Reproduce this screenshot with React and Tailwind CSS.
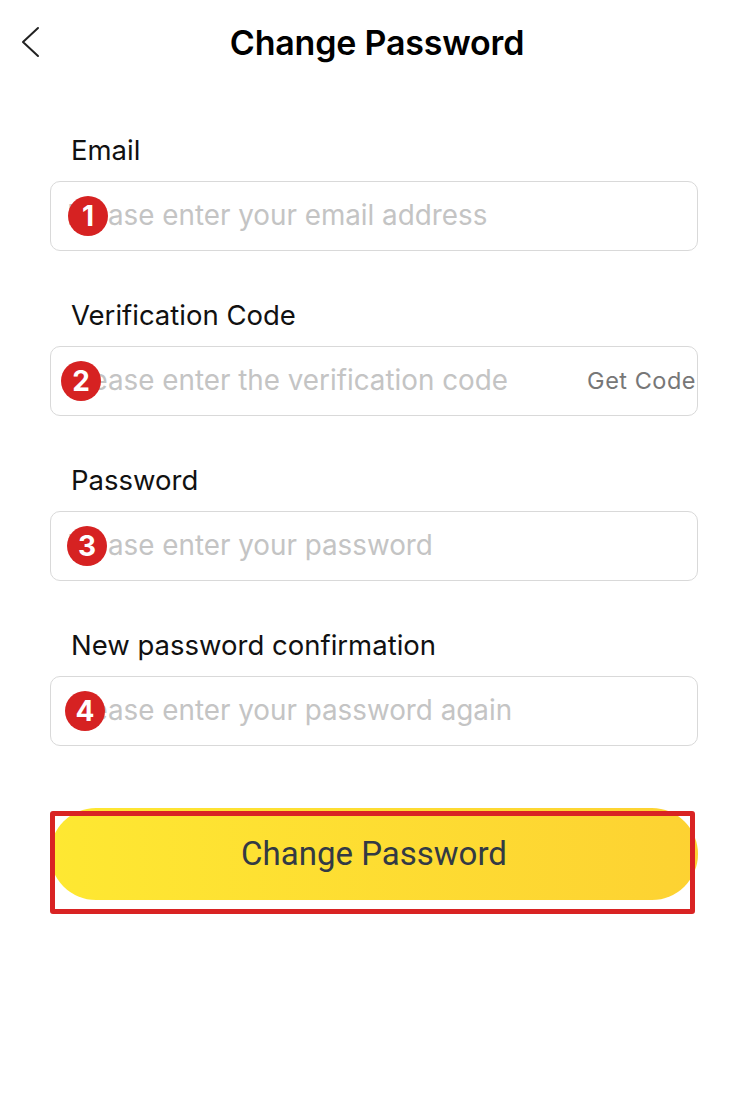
import { useState } from "react";

function Badge({ n, left }) {
    return (
        <span
            className="absolute top-1/2 -translate-y-1/2 w-[40px] h-[40px] rounded-full bg-[#d62222] text-white flex items-center justify-center text-[28px] font-bold leading-none"
            style={{ left }}
        >
            {n}
        </span>
    );
}

function Field({ label, placeholder, badge, badgeLeft, extra }) {
    return (
        <div className="flex flex-col">
            <label className="pl-[21px] text-[27.5px] leading-[32px] text-[#111] mb-[15px]">{label}</label>
            <div className="relative h-[70px] border border-[#d9d9d9] rounded-[10px] flex items-center pl-[16px] pr-[1px]">
                <input
                    className="flex-1 min-w-0 bg-transparent outline-none text-[27.8px] placeholder:text-[#c4c4c4] text-[#333]"
                    placeholder={placeholder}
                />
                {extra}
                <Badge n={badge} left={badgeLeft} />
            </div>
        </div>
    );
}

export default function App(){
    const [sent,setSent] = useState(false);

    return(
        <div className="w-[754px] min-h-[1102px] bg-white font-['Inter','Noto_Sans',sans-serif]">
            <div className="relative h-[84px] flex items-center justify-center">
                <button className="absolute left-[18px] top-[26px]">
                    <svg width="24" height="32" viewBox="0 0 24 32" fill="none">
                        <path d="M20 2 L5 16 L20 30" stroke="#222" strokeWidth="2" strokeLinecap="round" strokeLinejoin="round" />
                    </svg>
                </button>
                <h1 className="text-[34px] font-semibold text-black tracking-[-0.2px]">Change Password</h1>
            </div>

            <div className="pl-[50px] pr-[56px] pt-[50px] flex flex-col gap-[48px]">
                <Field label="Email" placeholder="Please enter your email address" badge="1" badgeLeft="17px" />
                <Field label="Verification Code" placeholder="Please enter the verification code" badge="2" badgeLeft="10px"
                    extra={
                        <button className="text-[23.5px] text-[#777] tracking-[0.5px] shrink-0" onClick={()=>setSent(true)}>
                            {sent ? "Sent" : "Get Code"}
                        </button>
                    }
                />
                <Field label="Password" placeholder="Please enter your password" badge="3" badgeLeft="16px" />
                <Field label="New password confirmation" placeholder="Please enter your password again" badge="4" badgeLeft="14px" />
            </div>

            <div className="pl-[50px] pr-[56px] mt-[62px]">
                <div className="relative">
                    <button className="w-full h-[92px] rounded-full bg-gradient-to-r from-[#fee832] to-[#fdd232] text-[33px] text-[#333a44] font-['Roboto',sans-serif]">
                        Change Password
                    </button>
                    <div className="absolute left-0 top-[3px] w-[645px] h-[103px] border-[5px] border-[#d92323] rounded-[3px] pointer-events-none"></div>
                </div>
            </div>
        </div>
    );
}
